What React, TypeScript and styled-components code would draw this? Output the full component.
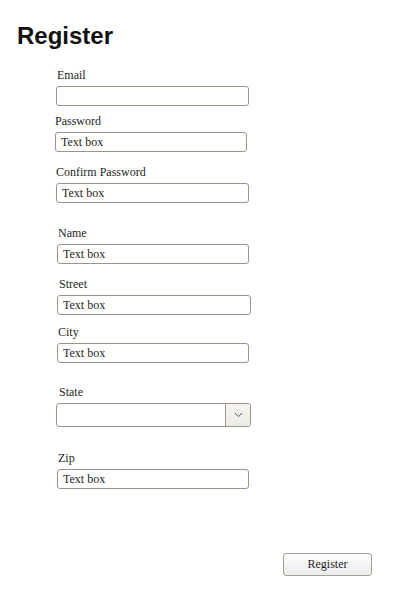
import React from "react";
import styled, { createGlobalStyle } from "styled-components";

const Global = createGlobalStyle`
  html, body { margin: 0; padding: 0; background: #ffffff; }
  body { font-family: "Liberation Serif", "Times New Roman", serif; color: #1e1e1e; }
  * { box-sizing: border-box; }
`;

const Page = styled.div`
  width: 400px;
  height: 600px;
  display: flex;
  flex-direction: column;
  padding-top: 22px;
`;

const Title = styled.h1`
  margin: 0 0 0 17px;
  font-family: "Liberation Sans", Arial, sans-serif;
  font-weight: 700;
  font-size: 24px;
  line-height: 27px;
  color: #111111;
`;

const Form = styled.form`
  display: flex;
  flex-direction: column;
  margin-top: 19px;
`;

const Field = styled.div<{ $top: number; $x: number; $w: number }>`
  display: flex;
  flex-direction: column;
  gap: 4px;
  margin-top: ${(p) => p.$top}px;
  margin-left: ${(p) => p.$x}px;
  width: ${(p) => p.$w}px;
`;

const Label = styled.label<{ $lx: number }>`
  display: block;
  padding-left: ${(p) => p.$lx}px;
  font-family: "Liberation Serif", "Times New Roman", serif;
  font-size: 12px;
  line-height: 14px;
  color: #1e1e1e;
`;

const TextInput = styled.input`
  display: block;
  width: 100%;
  height: 20px;
  margin: 0;
  padding: 0 0 0 5px;
  border: 1px solid #9d9486;
  border-radius: 3px;
  background: #ffffff;
  font-family: "Liberation Serif", "Times New Roman", serif;
  font-size: 12px;
  color: #1e1e1e;
  outline: none;
`;

const SelectBox = styled.div`
  display: flex;
  width: 100%;
  height: 24px;
  border: 1px solid #9d9486;
  border-radius: 3px;
  background: #ffffff;
  overflow: hidden;
`;

const SelectValue = styled.div`
  flex: 1;
`;

const SelectArrow = styled.div`
  width: 25px;
  display: flex;
  align-items: center;
  justify-content: center;
  border-left: 1px solid #a39a8c;
  background: linear-gradient(#f6f5f1, #ecebe5);
`;

const Actions = styled.div`
  display: flex;
  justify-content: flex-end;
  margin-top: 64px;
  padding-right: 28px;
`;

const Button = styled.button`
  width: 89px;
  height: 23px;
  margin: 0;
  padding: 0;
  border: 1px solid #a69d90;
  border-radius: 3px;
  background: linear-gradient(#ffffff, #ebebeb);
  font-family: "Liberation Serif", "Times New Roman", serif;
  font-size: 12px;
  color: #1e1e1e;
`;

type F = { label: string; top: number; x: number; w: number; lx: number; value?: string };

const fields: F[] = [
  { label: "Email", top: 0, x: 56, w: 193, lx: 1, value: "" },
  { label: "Password", top: 8, x: 55, w: 192, lx: 0, value: "Text box" },
  { label: "Confirm Password", top: 13, x: 56, w: 193, lx: 0, value: "Text box" },
  { label: "Name", top: 23, x: 57, w: 192, lx: 1, value: "Text box" },
  { label: "Street", top: 13, x: 57, w: 194, lx: 2, value: "Text box" },
  { label: "City", top: 10, x: 57, w: 192, lx: 1, value: "Text box" },
];

export default function App() {
  return (
    <>
      <Global />
      <Page>
        <Title>Register</Title>
        <Form onSubmit={(e) => e.preventDefault()}>
          {fields.map((f) => (
            <Field key={f.label} $top={f.top} $x={f.x} $w={f.w}>
              <Label $lx={f.lx}>{f.label}</Label>
              <TextInput defaultValue={f.value} readOnly />
            </Field>
          ))}
          <Field $top={22} $x={56} $w={195}>
            <Label $lx={3}>State</Label>
            <SelectBox>
              <SelectValue />
              <SelectArrow>
                <svg width="9" height="6" viewBox="0 0 9 6">
                  <path d="M0.8 1 L4.5 4.6 L8.2 1" fill="none" stroke="#555" strokeWidth="1" />
                </svg>
              </SelectArrow>
            </SelectBox>
          </Field>
          <Field $top={24} $x={57} $w={192}>
            <Label $lx={1}>Zip</Label>
            <TextInput defaultValue="Text box" readOnly />
          </Field>
        </Form>
        <Actions>
          <Button type="button">Register</Button>
        </Actions>
      </Page>
    </>
  );
}
